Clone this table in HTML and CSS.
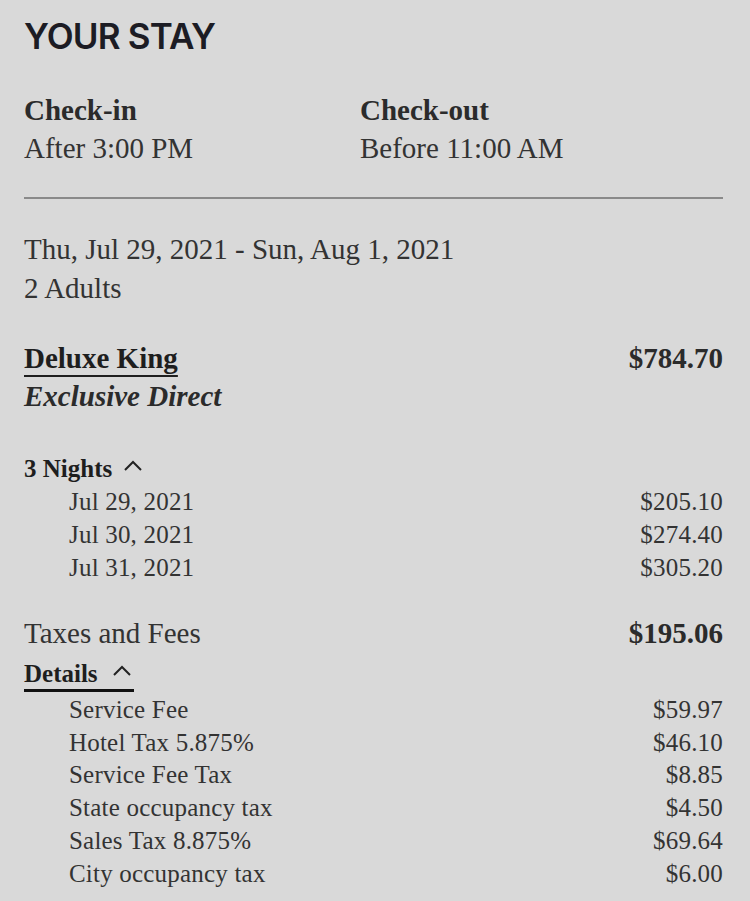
FILE: index.html
```html
<!DOCTYPE html>
<html lang="en">
<head>
<meta charset="utf-8">
<title>Your Stay</title>
<link rel="stylesheet" href="styles.css">
</head>
<body>
<main class="stay">
  <h1 class="title">YOUR STAY</h1>

  <section class="times">
    <div class="time-col">
      <div class="label">Check-in</div>
      <div class="value">After 3:00 PM</div>
    </div>
    <div class="time-col">
      <div class="label">Check-out</div>
      <div class="value">Before 11:00 AM</div>
    </div>
  </section>

  <hr class="divider">

  <section class="dates">
    <div class="value">Thu, Jul 29, 2021 - Sun, Aug 1, 2021</div>
    <div class="value">2 Adults</div>
  </section>

  <section class="room">
    <div class="room-row">
      <span class="room-name">Deluxe King</span>
      <span class="big-price">$784.70</span>
    </div>
    <div class="rate-name">Exclusive Direct</div>
  </section>

  <section class="nights">
    <div class="toggle">3 Nights <svg class="chev" width="18" height="11" viewBox="0 0 18 11"><path d="M1 10 L9 2 L17 10" fill="none" stroke="#222" stroke-width="2"/></svg></div>
    <div class="line"><span>Jul 29, 2021</span><span>$205.10</span></div>
    <div class="line"><span>Jul 30, 2021</span><span>$274.40</span></div>
    <div class="line"><span>Jul 31, 2021</span><span>$305.20</span></div>
  </section>

  <section class="taxes">
    <div class="room-row">
      <span class="value">Taxes and Fees</span>
      <span class="big-price">$195.06</span>
    </div>
    <div class="toggle details">Details <svg class="chev" width="18" height="11" viewBox="0 0 18 11"><path d="M1 10 L9 2 L17 10" fill="none" stroke="#222" stroke-width="2"/></svg></div>
    <div class="fee-list">
      <div class="line"><span>Service Fee</span><span>$59.97</span></div>
      <div class="line"><span>Hotel Tax 5.875%</span><span>$46.10</span></div>
      <div class="line"><span>Service Fee Tax</span><span>$8.85</span></div>
      <div class="line"><span>State occupancy tax</span><span>$4.50</span></div>
      <div class="line"><span>Sales Tax 8.875%</span><span>$69.64</span></div>
      <div class="line"><span>City occupancy tax</span><span>$6.00</span></div>
    </div>
  </section>
</main>
</body>
</html>
```

FILE: styles.css
```css
html, body {
  margin: 0;
  padding: 0;
  background: #d9d9d9;
}

body {
  font-family: "Liberation Serif", "Times New Roman", serif;
  color: #333333;
}

.stay {
  width: 699px;
  margin-left: 24px;
  padding-top: 14px;
}

.title {
  margin: 0;
  font-family: Inter, "Liberation Sans", sans-serif;
  font-weight: 600;
  font-size: 35px;
  line-height: 44px;
  letter-spacing: -0.8px;
  color: #1c1c24;
}

.times {
  display: flex;
  margin-top: 33px;
}

.time-col {
  width: 336px;
}

.label {
  font-size: 29px;
  line-height: 38px;
  font-weight: 700;
  color: #2b2b2b;
}

.value {
  font-size: 29px;
  line-height: 38px;
}

.divider {
  border: 0;
  border-top: 2px solid #8a8a8a;
  margin: 30px 0 0 0;
  height: 0;
}

.dates {
  margin-top: 31px;
}

.dates .value + .value {
  margin-top: 1px;
}

.room {
  margin-top: 32px;
}

.room-row {
  display: flex;
  justify-content: space-between;
  align-items: baseline;
  font-size: 29px;
  line-height: 38px;
}

.room-name {
  font-weight: 700;
  color: #1e1e1e;
  text-decoration: underline;
  text-decoration-thickness: 2px;
  text-underline-offset: 7px;
}

.big-price {
  font-weight: 700;
  color: #2b2b2b;
}

.rate-name {
  font-size: 29px;
  line-height: 38px;
  font-style: italic;
  font-weight: 700;
  color: #2b2b2b;
}

.nights {
  margin-top: 37px;
}

.toggle {
  display: inline-flex;
  align-items: center;
  gap: 12px;
  font-size: 25px;
  line-height: 33px;
  font-weight: 700;
  color: #1e1e1e;
}

.chev {
  margin-top: -6px;
}

.line {
  display: flex;
  justify-content: space-between;
  font-size: 25px;
  line-height: 33px;
  letter-spacing: 0.2px;
  padding-left: 45px;
}

.taxes {
  margin-top: 30px;
}

.details {
  margin-top: 7px;
  gap: 15px;
  padding-right: 3px;
  padding-bottom: 1px;
  border-bottom: 3px solid #111;
  line-height: 29px;
}

.fee-list {
  padding-top: 2px;
}

.fee-list .line {
  line-height: 32.7px;
}
```
